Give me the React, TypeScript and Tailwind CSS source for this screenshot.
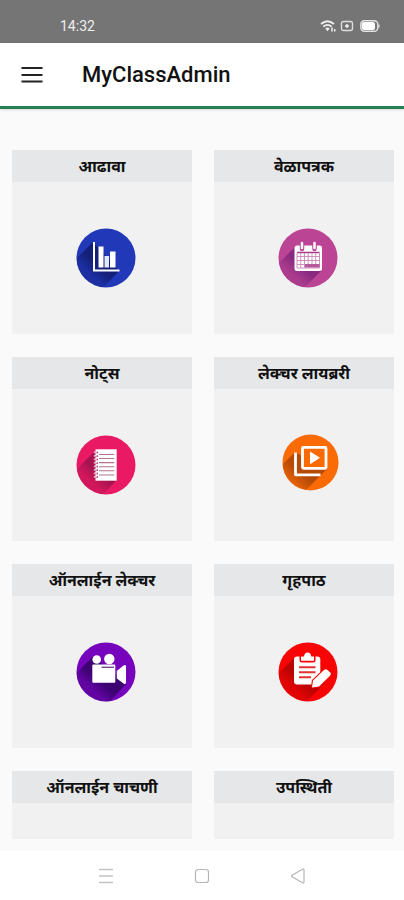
import type { ReactNode } from 'react';

interface DiscProps {
  id: string;
  color: string;
  shade: string;
  shadow: string;
  cx?: number;
  cy?: number;
  r?: number;
  children: ReactNode;
}

// Round badge with a long diagonal shadow behind the white glyph
const Disc = ({ id, color, shade, shadow, cx = 30, cy = 30, r = 29.5, children }: DiscProps) => (
  <svg viewBox="0 0 60 60" className="size-15 overflow-visible" aria-hidden="true">
    <defs>
      <clipPath id={`${id}-clip`}>
        <circle cx={cx} cy={cy} r={r} />
      </clipPath>
      <linearGradient id={`${id}-shade`} gradientUnits="userSpaceOnUse" x1="32" y1="26" x2="14" y2="46">
        <stop offset="0" stopColor={shade} />
        <stop offset="0.55" stopColor={shade} />
        <stop offset="1" stopColor={shade} stopOpacity="0.35" />
      </linearGradient>
    </defs>
    <circle cx={cx} cy={cy} r={r} fill={color} />
    <path d={shadow} fill={`url(#${id}-shade)`} clipPath={`url(#${id}-clip)`} />
    {children}
  </svg>
);

const OverviewIcon = () => (
  <Disc id="overview" color="#2138b8" shade="#141f78" shadow="M17 14 L-13 44 L14 73 L43 43 Z">
    <path d="M18 14 V42.5 H43.5" fill="none" stroke="#fff" strokeWidth="2" />
    <path d="M22.5 18.5 h5 v21 h-5z M34 23.5 h5.5 v16 H34z" fill="#fff" />
    <path d="M28.5 28 h4.5 v11.5 h-4.5z" fill="#e1e7fa" />
  </Disc>
);

const TimetableIcon = () => (
  <Disc id="timetable" color="#bc4494" shade="#892a80" shadow="M17 19 L-13 49 L14 72 L43 43 Z">
    <rect x="16.5" y="17.5" width="27.5" height="25.5" rx="2.5" fill="#fff" />
    <path d="M24 17 V21 M36.5 17 V21" stroke="#bc4494" strokeWidth="4.5" strokeLinecap="round" />
    <path d="M24 15 V20 M36.5 15 V20" stroke="#fff" strokeWidth="2.5" strokeLinecap="round" />
    <path d="M19 24.5 H41.5" stroke="#a83a8b" strokeWidth="1.5" />
    <path d="M19 28.5 H41.5 M19 32.5 H41.5 M19 36.5 H26 M19 40 H41.5" stroke="#c987b5" strokeWidth="0.9" />
    <path d="M19 25 V40 M22.7 25 V40 M26.5 25 V40 M30.2 25 V36 M34 25 V36 M37.7 25 V36 M41.5 25 V40" stroke="#c987b5" strokeWidth="0.9" />
    <path d="M27 36 H41.5 V39.5 H27z" fill="#b65a9e" />
  </Disc>
);

const NotesIcon = () => (
  <Disc id="notes" color="#e91a63" shade="#a71350" shadow="M20 15 L-10 45 L11 75 L40 46 Z">
    <path d="M19.5 14.3 H40.7 V45.7 H19.5z" fill="#fff" />
    {[17, 20.5, 24, 27.5, 31, 34.5, 38, 41.5].map((y) => (
      <g key={y}>
        <circle cx="21" cy={y + 0.5} r="0.9" fill="#a71350" />
        <path d={`M21 ${y + 0.5} C19 ${y - 1} 17.5 ${y} 18.5 ${y + 1.3}`} fill="none" stroke="#fff" strokeWidth="0.9" />
      </g>
    ))}
    <path d="M23 19.5 H38.3 M23 23.5 H38.3 M23 27.6 H38.3 M23 31.7 H38.3 M23 35.8 H38.3 M23 40 H38.3" stroke="#b5738c" strokeWidth="1.1" />
  </Disc>
);

const LibraryIcon = () => (
  <Disc id="library" color="#fb6b05" shade="#b64b08" shadow="M17 17 L-13 47 L14 69 L49 34 Z" cx={32.5} cy={27.5} r={28}>
    <rect x="24.5" y="12.3" width="23.5" height="21" rx="1" fill="#fb6b05" stroke="#fff" strokeWidth="2.8" />
    <path d="M17.5 17.5 V39.8 H42.5" fill="none" stroke="#fff" strokeWidth="2.8" strokeLinejoin="round" />
    <path d="M32 16.5 L42 22.8 L32 29.2 Z" fill="#fff" />
  </Disc>
);

const OnlineLectureIcon = () => (
  <Disc id="lecture" color="#7704bd" shade="#3d0373" shadow="M17 14.5 L-13 44.5 L20 75 L50 42 L39 32 Z">
    <circle cx="20.7" cy="17.5" r="4.3" fill="#fff" />
    <circle cx="33.3" cy="17" r="5.2" fill="#fff" />
    <rect x="16.3" y="22.5" width="23" height="18.3" rx="1" fill="#fff" />
    <path d="M25.5 25.3 H38" stroke="#714a91" strokeWidth="1.4" />
    <path d="M40.8 29 L47.5 23.5 Q50 22 50 24.5 V40 Q50 43 47.5 41.5 L40.8 36.5 Z" fill="#fff" />
  </Disc>
);

const HomeworkIcon = () => (
  <Disc id="homework" color="#f80404" shade="#b90505" shadow="M17 15 L-13 45 L15 73 L47 41 L36 36 Z">
    <rect x="16" y="14.5" width="26.3" height="28" rx="3" fill="#fff" />
    <path d="M21.5 14 V18 Q21.5 20.5 24 20.5 H35 Q37.5 20.5 37.5 18 V14 Z" fill="#f80404" />
    <path d="M23 18.7 V14.5 H26 Q26.5 10.5 29.6 10.5 Q32.7 10.5 33.2 14.5 H36 V18.7 Z" fill="#fff" />
    <path d="M21 25.3 H37.5 M21 30.3 H37.5 M21 35.3 H33" stroke="#e33232" strokeWidth="1.9" />
    <path d="M34 45.5 L35 38.5 L46 28 Q47.8 26.5 49.5 28 L52.5 30.8 Q53.5 32.3 52 33.7 L41 44.5 Z" fill="#fff" stroke="#f80404" strokeWidth="2.2" strokeLinejoin="round" paintOrder="stroke" />
  </Disc>
);

const tiles: { title: string; icon?: ReactNode }[] = [
  { title: 'आढावा', icon: <OverviewIcon /> },
  { title: 'वेळापत्रक', icon: <TimetableIcon /> },
  { title: 'नोट्स', icon: <NotesIcon /> },
  { title: 'लेक्चर लायब्ररी', icon: <LibraryIcon /> },
  { title: 'ऑनलाईन लेक्चर', icon: <OnlineLectureIcon /> },
  { title: 'गृहपाठ', icon: <HomeworkIcon /> },
  { title: 'ऑनलाईन चाचणी' },
  { title: 'उपस्थिती' },
];

const StatusBar = () => (
  <div className="flex h-[43px] shrink-0 items-center justify-between bg-[#757575] pt-2 pr-6 pl-15">
    <span className="text-sm leading-4 text-[#eeeeee]">14:32</span>
    <div className="flex items-center gap-1">
      <svg viewBox="0 0 16 14" className="h-3.5 w-4" fill="none" stroke="#eee" strokeWidth="1.7" aria-hidden="true">
        <path d="M1 5 Q7.5 -0.5 14 5 M3.3 7.7 Q7.5 4 11.7 7.7" />
        <path d="M5.3 9.5 Q7.5 7.6 9.7 9.5 L7.5 12.3 Z" fill="#eee" stroke="none" />
        <path d="M12 8.5 V12.5 M14.7 10 V12.5" strokeWidth="1.5" />
      </svg>
      <svg viewBox="0 0 14 12" className="h-3 w-3.5" aria-hidden="true">
        <rect x="1.5" y="1.5" width="11" height="9" rx="2" fill="none" stroke="#ddd" strokeWidth="1.4" />
        <path d="M7 3.8 L9.2 6 L7 8.2 L4.8 6 Z" fill="#eee" />
      </svg>
      <svg viewBox="0 0 20 12" className="ml-0.5 h-3 w-5" aria-hidden="true">
        <rect x="0.8" y="0.8" width="17" height="10.4" rx="3.5" fill="none" stroke="#e4e4e4" strokeWidth="1.4" />
        <rect x="1.8" y="2" width="13.2" height="8" rx="2" fill="#fff" />
        <path d="M19 4.5 V7.5" stroke="#e4e4e4" strokeWidth="1.2" />
      </svg>
    </div>
  </div>
);

const AppHeader = () => (
  <header className="flex h-[66px] shrink-0 items-center gap-[38px] border-b-3 border-[#238155] bg-white px-5 shadow-sm">
    <button type="button" aria-label="Menu" className="flex size-6 items-center justify-center">
      <svg viewBox="0 0 24 24" className="size-6" stroke="#222" strokeWidth="2" aria-hidden="true">
        <path d="M1.5 5 H22.5 M1.5 12 H22.5 M1.5 18.5 H22.5" />
      </svg>
    </button>
    <h1 className="text-[22px] leading-7 font-medium text-[#111]">MyClassAdmin</h1>
  </header>
);

const NavBar = () => (
  <nav className="flex h-[49px] shrink-0 items-center justify-center gap-20 bg-white">
    <button type="button" aria-label="Recent apps" className="size-4">
      <svg viewBox="0 0 16 16" className="size-4" stroke="#c4c4c4" strokeWidth="1.3" aria-hidden="true">
        <path d="M1 1.5 H15 M1 8 H15 M1 14.5 H15" />
      </svg>
    </button>
    <button type="button" aria-label="Home" className="size-4">
      <svg viewBox="0 0 16 16" className="size-4" fill="none" stroke="#b5b5b5" strokeWidth="1.2" aria-hidden="true">
        <rect x="1.5" y="1.5" width="13" height="13" rx="2.5" />
      </svg>
    </button>
    <button type="button" aria-label="Back" className="size-4">
      <svg viewBox="0 0 16 16" className="size-4" fill="none" stroke="#b5b5b5" strokeWidth="1.2" strokeLinejoin="round" aria-hidden="true">
        <path d="M2 7.2 Q1 8 2 8.8 L12.5 14.8 Q14 15.3 14 14 V2 Q14 0.7 12.5 1.2 Z" />
      </svg>
    </button>
  </nav>
);

export default function App() {
  return (
    <div className="flex h-screen flex-col bg-[#fafafa] font-['Roboto','Noto_Sans_Devanagari','Noto_Sans',sans-serif]">
      <StatusBar />
      <AppHeader />
      <main className="flex min-h-0 flex-1 flex-col pt-[41px] pr-2.5 pb-3 pl-3">
        <div className="grid min-h-0 flex-1 auto-rows-max grid-cols-2 gap-x-[22px] gap-y-[23px] overflow-hidden">
          {tiles.map(({ title, icon }) => (
            <button key={title} type="button" className="flex flex-col bg-[#f1f1f1]">
              <span className="flex h-8 w-full items-center justify-center bg-[#e5e7e8] pt-0.5 text-base font-bold text-[#111]">
                {title}
              </span>
              <span className="flex h-38 w-full items-center justify-center pl-2">{icon}</span>
            </button>
          ))}
        </div>
      </main>
      <NavBar />
    </div>
  );
}
